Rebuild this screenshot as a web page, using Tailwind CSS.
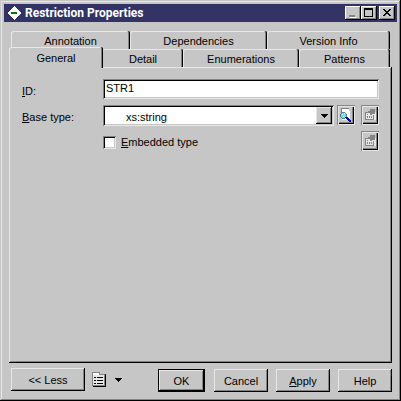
<!DOCTYPE html>
<html lang="en">
<head>
  <meta charset="UTF-8" />
  <title>Restriction Properties</title>
  <script src="https://cdn.jsdelivr.net/npm/@tailwindcss/browser@4"></script>
</head>
<body class="bg-[#c6c6c6]">

  <div class="min-h-screen flex flex-col p-[2px] bg-[#c6c6c6] text-black text-[11px] leading-4 font-['Liberation_Sans',sans-serif] shadow-[inset_-1px_-1px_#000,inset_1px_1px_#c6c6c6,inset_-2px_-2px_#848484,inset_2px_2px_#e7e7e7]">

    <!-- title bar -->
    <header class="mx-[2px] mt-[2px] h-[18px] shrink-0 flex items-center bg-[#333366] text-white pl-[3px] pr-[2px]">
      <svg class="w-[14px] h-[14px] mr-1" viewBox="0 0 14 14" shape-rendering="crispEdges">
        <path d="M7 0L14 7L7 14L0 7Z" fill="#fff"/>
        <path d="M4 6h6v2H4z" fill="#008000"/>
      </svg>
      <h1 class="flex-1 text-[12px] font-bold font-[Roboto,sans-serif]">Restriction Properties</h1>
      <button aria-label="Minimize" class="w-4 h-[14px] bg-[#c6c6c6] shadow-[inset_-1px_-1px_#000,inset_1px_1px_#fff,inset_-2px_-2px_#848484]">
        <svg class="w-4 h-[14px]" viewBox="0 0 16 14" shape-rendering="crispEdges"><path d="M4 9h6v2H4z" fill="#848484"/><path d="M5 11h6v1H5z" fill="#fff"/></svg>
      </button>
      <button aria-label="Maximize" class="w-4 h-[14px] bg-[#c6c6c6] shadow-[inset_-1px_-1px_#000,inset_1px_1px_#fff,inset_-2px_-2px_#848484]">
        <svg class="w-4 h-[14px]" viewBox="0 0 16 14" shape-rendering="crispEdges"><path d="M3 2h9v9H3zM4 4v6h7V4z" fill="#000" fill-rule="evenodd"/></svg>
      </button>
      <button aria-label="Close" class="ml-[2px] w-4 h-[14px] bg-[#c6c6c6] shadow-[inset_-1px_-1px_#000,inset_1px_1px_#fff,inset_-2px_-2px_#848484]">
        <svg class="w-4 h-[14px]" viewBox="0 0 16 14" shape-rendering="crispEdges"><path d="M4 3h2v1h1v1h2V4h1V3h2v1h-1v1h-1v1H9v1h1v1h1v1h1v1h-2V9H9V8H7v1H6v1H4V9h1V8h1V7h1V6H6V5H5V4H4z" fill="#000"/></svg>
      </button>
    </header>

    <main class="mt-[9px] mx-[7px] flex-1 flex flex-col">
      <!-- tabs -->
      <div class="flex h-[18px] ml-[2px] mr-[2px]">
        <button class="flex-[119] min-w-0 pt-[2px] rounded-t-[2px] shadow-[inset_-1px_0_#000,inset_1px_1px_#e7e7e7,inset_-2px_0_#848484]">Annotation</button>
        <button class="flex-[137] min-w-0 pt-[2px] rounded-t-[2px] shadow-[inset_-1px_0_#000,inset_1px_1px_#e7e7e7,inset_-2px_0_#848484]">Dependencies</button>
        <button class="flex-[123] min-w-0 pt-[2px] rounded-t-[2px] shadow-[inset_-1px_0_#000,inset_1px_1px_#e7e7e7,inset_-2px_0_#848484]">Version Info</button>
      </div>
      <div class="flex h-[18px] mr-[2px] items-end">
        <button class="relative z-10 -mb-px h-[21px] shrink-0 flex-[94] min-w-0 bg-[#c6c6c6] rounded-t-[2px] shadow-[inset_-1px_0_#000,inset_1px_1px_#e7e7e7,inset_-2px_0_#848484]">General</button>
        <button class="flex-[80] min-w-0 h-[18px] pt-[2px] rounded-t-[2px] shadow-[inset_-1px_0_#000,inset_0_1px_#e7e7e7,inset_-2px_0_#848484]">Detail</button>
        <button class="flex-[116] min-w-0 h-[18px] pt-[2px] rounded-t-[2px] shadow-[inset_-1px_0_#000,inset_1px_1px_#e7e7e7,inset_-2px_0_#848484]">Enumerations</button>
        <button class="flex-[91] min-w-0 h-[18px] pt-[2px] rounded-t-[2px] shadow-[inset_-1px_0_#000,inset_1px_1px_#e7e7e7,inset_-2px_0_#848484]">Patterns</button>
      </div>

      <!-- general tab -->
      <section class="flex-1 flex flex-col gap-[6px] pt-3 px-[13px] shadow-[inset_-1px_-1px_#000,inset_1px_1px_#e7e7e7,inset_-2px_-2px_#848484]">
        <div class="flex h-5">
          <label for="id" class="w-[81px] pt-1"><u>I</u>D:</label>
          <input id="id" type="text" value="STR1" class="flex-1 min-w-0 bg-white pl-[3px] pb-[2px] outline-none shadow-[inset_1px_1px_#848484,inset_-1px_-1px_#e7e7e7,inset_2px_2px_#000,inset_-2px_-2px_#c6c6c6]" />
        </div>
        <div class="flex h-5">
          <label for="base" class="w-[81px] pt-1"><u>B</u>ase type:</label>
          <div class="relative flex-1 h-[21px]">
            <select id="base" class="appearance-none w-full h-full bg-white pl-[23px] pt-[2px] outline-none shadow-[inset_1px_1px_#848484,inset_-1px_-1px_#e7e7e7,inset_2px_2px_#000,inset_-2px_-2px_#c6c6c6]">
              <option>xs:string</option>
            </select>
            <span class="absolute right-[2px] top-[2px] bottom-[2px] w-4 flex items-center justify-center pointer-events-none bg-[#c6c6c6] shadow-[inset_-1px_-1px_#000,inset_1px_1px_#e7e7e7,inset_-2px_-2px_#848484]">
              <svg class="w-[7px] h-1" viewBox="0 0 7 4" shape-rendering="crispEdges"><path d="M0 0h7v1H6v1H5v1H4v1H3V3H2V2H1V1H0z"/></svg>
            </span>
          </div>
          <button aria-label="Browse" class="ml-[3px] w-[18px] h-5 shadow-[inset_1px_1px_#848484,inset_-1px_-1px_#e7e7e7,inset_2px_2px_#e7e7e7,inset_-2px_-2px_#000,inset_-3px_-3px_#848484]">
            <svg class="w-[18px] h-5" viewBox="0 0 18 20" shape-rendering="crispEdges">
              <path d="M4 3h8v1H5v5H4z" fill="#848484"/>
              <path d="M5 4h7v2h1v9H5z" fill="#fff"/>
              <path d="M5 7h3v1h1v1h1v3H9v1H8v1H5v-1H4v-1H3V9h1V8h1z" fill="#4a848c"/>
              <path d="M5 8h3v1h1v3H8v1H5v-1H4V9h1z" fill="#63e7e7"/>
              <path d="M5 9h1v1H5zM7 8h1v1H7zM6 11h1v1H6z" fill="#fff"/>
              <path d="M9 12h1v1h1v1h1v1h1v1h1v1h-2v-1h-1v-1h-1v-1H9v-1H8v-1z" fill="#000084"/>
              <path d="M10 12h1v1h1v1h1v1h1v2h-1v-1h-1v-1h-1v-1h-1z" fill="#0000ff"/>
            </svg>
          </button>
          <button aria-label="Base type properties" class="ml-[6px] w-[18px] h-5 shadow-[inset_1px_1px_#848484,inset_-1px_-1px_#e7e7e7,inset_2px_2px_#e7e7e7,inset_-2px_-2px_#000,inset_-3px_-3px_#848484]">
            <svg class="w-[18px] h-5" viewBox="0 0 18 20" shape-rendering="crispEdges">
              <path d="M5 7h10v8H5z" fill="#e7e7e7"/>
              <path d="M9 4h5v5h-3v1H9V8H7V6h2zM4 7h3v1H5v6h7v-4h1v5H4zM6 9h1v1H6zM6 11h1v2H6zM8 11h1v2H8zM10 11h1v2h-1z" fill="#848484"/>
            </svg>
          </button>
        </div>
        <div class="flex h-5">
          <label class="ml-[81px] mr-auto flex items-center gap-[5px] pt-[2px]">
            <input type="checkbox" class="appearance-none w-[13px] h-[13px] bg-white shadow-[inset_1px_1px_#848484,inset_-1px_-1px_#e7e7e7,inset_2px_2px_#000,inset_-2px_-2px_#c6c6c6]" />
            <span><u>E</u>mbedded type</span>
          </label>
          <button aria-label="Embedded type properties" class="w-[18px] h-5 shadow-[inset_1px_1px_#848484,inset_-1px_-1px_#e7e7e7,inset_2px_2px_#e7e7e7,inset_-2px_-2px_#000,inset_-3px_-3px_#848484]">
            <svg class="w-[18px] h-5" viewBox="0 0 18 20" shape-rendering="crispEdges">
              <path d="M5 7h10v8H5z" fill="#e7e7e7"/>
              <path d="M9 4h5v5h-3v1H9V8H7V6h2zM4 7h3v1H5v6h7v-4h1v5H4zM6 9h1v1H6zM6 11h1v2H6zM8 11h1v2H8zM10 11h1v2h-1z" fill="#848484"/>
            </svg>
          </button>
        </div>
      </section>
    </main>

    <!-- actions -->
    <footer class="mt-[5px] mb-[7px] ml-[9px] mr-[7px] flex items-start">
      <button class="w-[74px] h-[23px] shadow-[inset_-1px_-1px_#000,inset_1px_1px_#e7e7e7,inset_-2px_-2px_#848484]">&lt;&lt; Less</button>
      <button aria-label="Menu" class="ml-[7px] mt-1 flex items-center">
        <svg class="w-[14px] h-[15px]" viewBox="0 0 14 15" shape-rendering="crispEdges">
          <path d="M0 0h8v2h5v12H0z" fill="#848484"/>
          <path d="M1 1h6v2H1z" fill="#fff"/>
          <path d="M1 3h11v10H1z" fill="#e7e7e7"/>
          <path d="M13 2h1v13H1v-1h12zM2 5h2v1H2zM5 5h6v1H5zM2 8h2v1H2zM5 8h6v1H5zM2 11h2v1H2zM5 11h6v1H5z" fill="#000"/>
        </svg>
        <svg class="ml-[9px] w-[7px] h-1" viewBox="0 0 7 4" shape-rendering="crispEdges"><path d="M0 0h7v1H6v1H5v1H4v1H3V3H2V2H1V1H0z"/></svg>
      </button>
      <div class="ml-auto mt-px flex">
        <button class="w-[47px] h-[23px] border border-black shadow-[inset_-1px_-1px_#000,inset_1px_1px_#e7e7e7,inset_-2px_-2px_#848484]">OK</button>
        <button class="ml-[9px] w-[54px] h-[23px] pt-px shadow-[inset_-1px_-1px_#000,inset_1px_1px_#e7e7e7,inset_-2px_-2px_#848484]">Cancel</button>
        <button class="ml-2 w-[54px] h-[23px] shadow-[inset_-1px_-1px_#000,inset_1px_1px_#e7e7e7,inset_-2px_-2px_#848484]"><u>A</u>pply</button>
        <button class="ml-2 w-[54px] h-[23px] shadow-[inset_-1px_-1px_#000,inset_1px_1px_#e7e7e7,inset_-2px_-2px_#848484]">Help</button>
      </div>
    </footer>
  </div>

</body>
</html>
